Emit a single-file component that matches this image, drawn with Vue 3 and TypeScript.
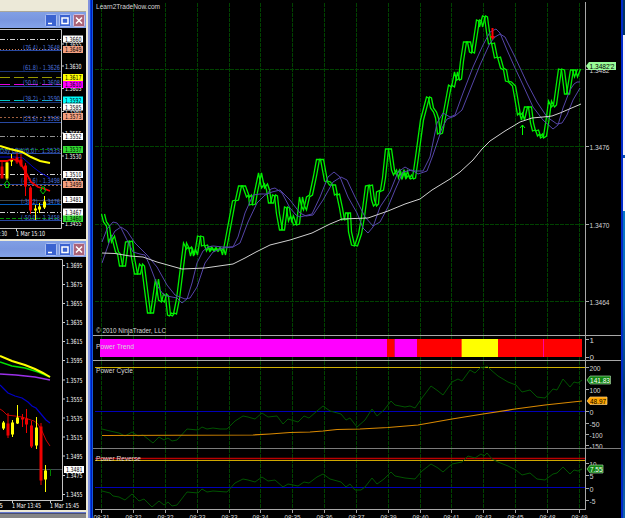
<style scoped>
.workspace {
    display: flex;
    width: 625px;
    height: 518px;
    overflow: hidden;
    background: #000;
    font-family: "Liberation Sans", Arial, sans-serif;
}

svg {
    display: block;
    flex: none;
}

.terminals {
    width: 86px;
    flex: none;
    display: flex;
    flex-direction: column;
    background: #858585;
}

.toolbar {
    height: 11px;
    background: #ece9d8;
    border-bottom: 1px solid #aaa79c;
}

.titlebar {
    height: 16px;
    box-sizing: border-box;
    display: flex;
    justify-content: flex-end;
    align-items: center;
    gap: 2px;
    padding-right: 1px;
    background: linear-gradient(#819fe5, #7996df 50%, #84a3e9);
}

.titlebar.second {
    height: 18px;
    border-top: 2px solid #ece9d8;
}

.bottom-edge {
    height: 1px;
    border-top: 2px solid #ece9d8;
    border-bottom: 1px solid #4a4f70;
    background: #6378cf;
}

.frame {
    width: 7px;
    flex: none;
    background: linear-gradient(90deg, #ece9d8 0 2px, #8192de 2px 4px, #0046e0 4px 5px, #0019bc 5px 6px, #155ad8 6px);
}

.platform {
    width: 528px;
    flex: none;
    display: flex;
    flex-direction: column;
}

.platform svg {
    overflow: visible;
}

.edge {
    width: 2px;
    flex: none;
    background: #0029c9;
}

.desktop {
    width: 2px;
    flex: none;
    display: flex;
    flex-direction: column;
    background: #064c98;
}

.desktop .sky {
    height: 35px;
    background: #03345f;
}

.desktop .page {
    height: 176px;
    background: linear-gradient(#f4f4fa 0 120px, #0a50b0 120px 123px, #f4f4fa 123px);
}

.desktop .hill {
    flex: 1;
    background: linear-gradient(#0878c4, #0768b8 30%, #03366d 60%, #1266b0);
}

text {
    fill: #d6d6d6;
    font-size: 8px;
}

.mt text {
    fill: #fff;
    font-family: "DejaVu Sans", "Liberation Sans", sans-serif;
    font-size: 7px;
}

.mt text.fib {
    fill: #4a70dc;
}

.mt text.dark,
text.dark {
    fill: #000;
}

text.light {
    fill: #fff;
}

polyline,
.line {
    fill: none;
}

.grid {
    stroke: #004300;
    stroke-dasharray: 4 1;
}

.axis {
    stroke: #a8a8a8;
}

.price {
    stroke: #00f000;
    stroke-width: 1.3;
}

.average {
    stroke: #5545a8;
}

.slow {
    stroke: #d0d0d0;
}

.osc {
    stroke: #005400;
}
</style>

<template>
    <div class="workspace">
        <aside class="terminals">
            <div class="toolbar"></div>
            <div class="titlebar">
                <svg v-for="b in buttons" :key="b.name" width="12" height="13" viewBox="0 0 12 13">
                    <rect x=".5" y=".5" width="11" height="12" rx="1" :fill="b.fill" :stroke="b.border" />
                    <path :d="b.path" fill="none" stroke="#fff" stroke-width="1.5" />
                </svg>
            </div>
            <svg class="mt" width="86" height="211" viewBox="0 28 86 211">
                <rect y="28" width="86" height="211" />
                <path d="M0 29.500H61.500V228.500H0" class="line" stroke="#c4c4c4" />
                <line v-for="(l, i) in levels" :key="i" x1="0" x2="61" :y1="l.y" :y2="l.y" :stroke="l.color" :stroke-dasharray="l.dash" />
                <text v-for="f in fibs" :key="f.y" class="fib" :x="f.x" :y="f.y" :textLength="60 - f.x" lengthAdjust="spacingAndGlyphs">{{ f.text }}</text>
                <polyline points="0,157 15,157 23,158 33,167 41,173 50,178" stroke="#0000c8" />
                <g v-for="c in topCandles" :key="c.x" :fill="c.color" :stroke="c.color">
                    <line :x1="c.x" :x2="c.x" :y1="c.high" :y2="c.low" />
                    <rect :x="c.x - 1" :y="c.top" width="2" :height="c.bottom - c.top" />
                </g>
                <polyline points="0,161 7,161 12,159 19,161 24,169 31,182 38,187 45,189 50,191" stroke="#f00000" stroke-width="1.8" />
                <polyline points="0,146 10,149 22,152 31,157 40,161 50,163" stroke="#ffff00" stroke-width="2" />
                <path d="M7 180.500l-3 4h1.500v3h3v-3h1.500z" stroke="#00c000" class="line" />
                <path d="M43 194l-3-4h1.500v-3h3v3h1.500z" stroke="#00c000" class="line" />
                <g v-for="p in topPrices" :key="p.y">
                    <rect v-if="p.color" x="63" :y="p.y - 3.500" width="20" height="7" :fill="p.color" />
                    <line v-else x1="62" x2="64" :y1="p.y" :y2="p.y" stroke="#ccc" />
                    <text :class="{ dark: p.color }" x="65" :y="p.y + 2.500" textLength="16.500" lengthAdjust="spacingAndGlyphs">{{ p.text }}</text>
                </g>
                <path d="M16.500 228v3" stroke="#ccc" />
                <text x="0" y="236" textLength="7" lengthAdjust="spacingAndGlyphs">:30</text>
                <text x="16" y="236" textLength="29" lengthAdjust="spacingAndGlyphs">1 Mar 15:10</text>
            </svg>
            <div class="titlebar second">
                <svg v-for="b in buttons" :key="b.name" width="12" height="13" viewBox="0 0 12 13">
                    <rect x=".5" y=".5" width="11" height="12" rx="1" :fill="b.fill" :stroke="b.border" />
                    <path :d="b.path" fill="none" stroke="#fff" stroke-width="1.5" />
                </svg>
            </div>
            <svg class="mt" width="86" height="253" viewBox="0 257 86 253">
                <rect y="257" width="86" height="253" />
                <path d="M0 259.500H62.500V500.500H0" class="line" stroke="#c4c4c4" />
                <polyline points="0,374 16,375 35,377 50,380" stroke="#9b30e8" stroke-width="1.3" />
                <polyline points="0,362 12,366 25,368 38,372 50,377" stroke="#00e000" stroke-width="1.5" />
                <polyline points="0,356 12,361 25,365 35,369 43,373 50,377" stroke="#ffff00" stroke-width="2" />
                <polyline points="0,385 4,389 8,393 15,396 22,398 28,402 32,406 36,408 41,414 46,420 50,423" stroke="#0000c8" stroke-width="1.2" />
                <polyline points="0,409 3,411 7,415 15,416 22,417 28,419 34,421 38,424 42,431 46,440 50,446" stroke="#c80000" />
                <path d="M0 469.500H62" stroke="#414b50" />
                <g v-for="c in bottomCandles" :key="c.x" :fill="c.color" :stroke="c.color">
                    <line :x1="c.x" :x2="c.x" :y1="c.high" :y2="c.low" />
                    <rect :x="c.x - 1" :y="c.top" width="2" :height="c.bottom - c.top" />
                </g>
                <path d="M50.500 469v7" stroke="#008000" />
                <g v-for="p in bottomPrices" :key="p.y">
                    <rect v-if="p.color" x="64" :y="p.y - 3.500" width="20" height="7" :fill="p.color" />
                    <line v-else x1="63" x2="65" :y1="p.y" :y2="p.y" stroke="#ccc" />
                    <text :class="{ dark: p.color }" x="66" :y="p.y + 2.500" textLength="16.500" lengthAdjust="spacingAndGlyphs">{{ p.text }}</text>
                </g>
                <path d="M12.500 500v3M50.500 500v3" stroke="#ccc" />
                <text x="-1" y="508" textLength="4" lengthAdjust="spacingAndGlyphs">5</text>
                <text x="12" y="508" textLength="29" lengthAdjust="spacingAndGlyphs">1 Mar 13:45</text>
                <text x="50" y="508" textLength="29" lengthAdjust="spacingAndGlyphs">1 Mar 15:45</text>
            </svg>
            <div class="bottom-edge"></div>
        </aside>
        <div class="frame"></div>

        <main class="platform">
            <svg width="528" height="335" viewBox="93 0 528 335">
                <line v-for="x in columns" :key="x" class="grid" :x1="x" :x2="x" y1="3" y2="335" />
                <line v-for="p in prices" :key="p.y" class="grid" x1="95" x2="585" :y1="p.y" :y2="p.y" />
                <path class="axis" d="M585.500 2V335" />
                <polyline class="price" :points="price" transform="translate(-1.500 0)" />
                <polyline class="price" :points="price" transform="translate(1.500 0)" />
                <polyline class="average" :points="fastAverage" />
                <polyline class="average" :points="slowAverage" />
                <polyline class="slow" :points="trendAverage" />
                <path d="M492.500 28v9" stroke="#f00" stroke-width="2" />
                <path d="M490 36h5l-2.500 4z" fill="#f00" />
                <path d="M522.500 135v-10M520 128l2.500-3 2.500 3" class="line" stroke="#00ff00" />
                <g v-for="p in prices" :key="p.text">
                    <path class="axis" :d="`M585 ${p.y}h4`" />
                    <text x="589.500" :y="p.y + 3" textLength="20" lengthAdjust="spacingAndGlyphs">{{ p.text }}</text>
                </g>
                <path d="M586 66l3-4h27v8h-27z" fill="#98fb98" />
                <text class="dark" x="589.500" y="69" textLength="25" lengthAdjust="spacingAndGlyphs">1.3482'2</text>
                <text x="96" y="9" textLength="64" lengthAdjust="spacingAndGlyphs">Learn2TradeNow.com</text>
                <text x="96" y="333" textLength="70" lengthAdjust="spacingAndGlyphs">© 2010 NinjaTrader, LLC</text>
            </svg>

            <svg width="528" height="25" viewBox="93 335 528 25">
                <path class="axis" d="M93 335.500H621M585.500 335V360M585 339.500h4M585 357.500h4" />
                <line v-for="x in columns" :key="x" class="grid" :x1="x" :x2="x" y1="336" y2="360" />
                <rect v-for="t in trend" :key="t.x" :x="t.x" y="339" :width="t.end - t.x" height="18" :fill="t.color" />
                <text x="96" y="348.500" textLength="38" lengthAdjust="spacingAndGlyphs">Power Trend</text>
                <text x="589.500" y="343" textLength="3.500">1</text>
                <text x="589.500" y="360" textLength="3.500">0</text>
            </svg>

            <svg width="528" height="88" viewBox="93 360 528 88">
                <path class="axis" d="M93 360.500H621M585.500 360V448" />
                <line v-for="x in columns" :key="x" class="grid" :x1="x" :x2="x" y1="361" y2="448" />
                <path d="M95 367.500H585" stroke="#d0b000" />
                <path d="M95 411.500H585" stroke="#0000b8" />
                <polyline class="osc" :points="cycle" />
                <polyline points="102,435.500 253,435 270,434 290,432.500 310,432 323,431 337,429.500 360,429 388,427.500 418,425 452,419 483,414 515,409 545,405 582,401" stroke="#d88800" stroke-width="1.2" />
                <text x="96" y="373" textLength="37" lengthAdjust="spacingAndGlyphs">Power Cycle</text>
                <g v-for="t in cycleTicks" :key="t.y">
                    <path class="axis" :d="`M585 ${t.y}h4`" />
                    <text :x="589.500" :y="t.y + 3" :textLength="t.width" lengthAdjust="spacingAndGlyphs">{{ t.text }}</text>
                </g>
                <path d="M587 380l3-4h20.500v8h-20.500z" fill="#118411" stroke="#9fcf9f" stroke-width=".7" />
                <text class="light" x="590" y="383" textLength="20" lengthAdjust="spacingAndGlyphs">141.83</text>
                <path d="M587 401l3-4h17v7.500h-17z" fill="#ffa500" stroke="#ffd080" stroke-width=".7" />
                <text class="dark" x="590" y="403.500" textLength="16" lengthAdjust="spacingAndGlyphs">48.97</text>
            </svg>

            <svg width="528" height="70" viewBox="93 448 528 70">
                <path stroke="#7c7c7c" d="M93 448.500H621" />
                <path class="axis" d="M585.500 448V510" />
                <line v-for="x in columns" :key="x" class="grid" :x1="x" :x2="x" y1="449" y2="509" />
                <path d="M95 458.500H585" stroke="#b80000" stroke-width="1.400" />
                <path d="M95 460.500H585" stroke="#d0a800" />
                <path d="M95 487.500H585" stroke="#0000b8" />
                <polyline class="osc" :points="reverse" />
                <path class="axis" d="M95 509.500H586" />
                <text x="96" y="461" textLength="45" lengthAdjust="spacingAndGlyphs">Power Reverse</text>
                <g v-for="t in reverseTicks" :key="t.y">
                    <path class="axis" :d="`M585 ${t.y}h4`" />
                    <text :x="589.500" :y="t.y + 3" :textLength="t.width" lengthAdjust="spacingAndGlyphs">{{ t.text }}</text>
                </g>
                <path d="M587 469l3-4h13v8h-13z" fill="#118411" stroke="#9fcf9f" stroke-width=".7" />
                <text class="light" x="590" y="472" textLength="12.500" lengthAdjust="spacingAndGlyphs">7.55</text>
                <g v-for="(x, i) in columns" :key="x">
                    <path class="axis" :d="`M${x} 509v4`" />
                    <text :x="x - 8" y="520" textLength="16" lengthAdjust="spacingAndGlyphs">{{ times[i] }}</text>
                </g>
            </svg>
        </main>

        <div class="edge"></div>
        <div class="desktop">
            <div class="sky"></div>
            <div class="page"></div>
            <div class="hill"></div>
        </div>
    </div>
</template>

<script setup lang="ts">
interface Candle {
    x: number;
    high: number;
    top: number;
    bottom: number;
    low: number;
    color: string;
}

interface PriceLabel {
    y: number;
    text: string;
    color?: string;
}

const buttons = [
    { name: "minimize", fill: "#3a62d0", border: "#a9bdf2", path: "M3 9.5h4" },
    { name: "maximize", fill: "#3a62d0", border: "#a9bdf2", path: "M3 4h6v5.500h-6z" },
    { name: "close", fill: "#ac6478", border: "#d0bfe0", path: "M3 3.500l6 6M9 3.500l-6 6" }
];

const levels = [
    { y: 39.5, color: "#d0d0d0", dash: "5 2 1 2" },
    { y: 49.5, color: "#c87850", dash: "1 2" },
    { y: 50.5, color: "#2848a0", dash: "" },
    { y: 71.5, color: "#1c3478", dash: "" },
    { y: 77.5, color: "#989800", dash: "10 4" },
    { y: 84.5, color: "#e000e0", dash: "10 4" },
    { y: 86.5, color: "#2848a0", dash: "" },
    { y: 100.5, color: "#00c8c8", dash: "10 4" },
    { y: 102.5, color: "#1c3478", dash: "" },
    { y: 107.5, color: "#d0d0d0", dash: "5 2 1 2" },
    { y: 117.5, color: "#a06040", dash: "2 2" },
    { y: 122.5, color: "#2848a0", dash: "" },
    { y: 136.5, color: "#909090", dash: "5 2 1 2" },
    { y: 149.5, color: "#008000", dash: "3 2" },
    { y: 153.5, color: "#2848a0", dash: "" },
    { y: 174.5, color: "#d0d0d0", dash: "5 2 1 2" },
    { y: 184.5, color: "#2848a0", dash: "" },
    { y: 185.5, color: "#a06040", dash: "2 2" },
    { y: 200.5, color: "#40484c", dash: "" },
    { y: 204.5, color: "#0058b8", dash: "" },
    { y: 212.5, color: "#d0d0d0", dash: "5 2 1 2" },
    { y: 218.5, color: "#009000", dash: "4 2" },
    { y: 220.5, color: "#2848a0", dash: "" }
];

const fibs = [
    { x: 23, y: 49.5, text: "(76.4) -  1.3648" },
    { x: 23, y: 70, text: "(61.8) -  1.3626" },
    { x: 23, y: 85, text: "(50.0) -  1.3608" },
    { x: 23, y: 101, text: "(38.2) -  1.3590" },
    { x: 23, y: 121, text: "(23.6) -  1.3568" },
    { x: 0, y: 152.5, text: "Day  LOW(0.0) -  1.3533" },
    { x: 21, y: 183, text: "(-23.6) -  1.3498" },
    { x: 21, y: 204, text: "(-38.2) -  1.3476" },
    { x: 21, y: 219.5, text: "(-50.0) -  1.3458" }
];

const red = "#f00000";
const yellow = "#ffff00";
const salmon = "#f4a080";

const topCandles: Candle[] = [
    { x: 2, high: 160, top: 167, bottom: 178, low: 178, color: red },
    { x: 7, high: 160, top: 163, bottom: 178, low: 180, color: yellow },
    { x: 11.5, high: 154, top: 160, bottom: 161, low: 166, color: yellow },
    { x: 17, high: 153, top: 158, bottom: 162, low: 164, color: red },
    { x: 21, high: 154, top: 160, bottom: 165, low: 167, color: red },
    { x: 25.5, high: 163, top: 166, bottom: 186, low: 196, color: red },
    { x: 30.5, high: 186, top: 188, bottom: 210, low: 214, color: red },
    { x: 35.5, high: 205, top: 209, bottom: 210, low: 220, color: yellow },
    { x: 39.5, high: 203, top: 207, bottom: 209, low: 213, color: yellow },
    { x: 44.5, high: 196, top: 202, bottom: 207, low: 209, color: yellow }
];

const bottomCandles: Candle[] = [
    { x: 3.5, high: 421, top: 423, bottom: 428, low: 430, color: yellow },
    { x: 8, high: 413, top: 424, bottom: 435, low: 438, color: red },
    { x: 12.5, high: 420, top: 423, bottom: 434, low: 437, color: yellow },
    { x: 17.5, high: 405, top: 418, bottom: 423, low: 424, color: yellow },
    { x: 22.5, high: 414, top: 418, bottom: 419, low: 427, color: red },
    { x: 26.5, high: 409, top: 419, bottom: 424, low: 433, color: red },
    { x: 31.5, high: 421, top: 426, bottom: 446, low: 448, color: red },
    { x: 36.5, high: 417, top: 428, bottom: 445, low: 449, color: yellow },
    { x: 41, high: 423, top: 427, bottom: 480, low: 485, color: red },
    { x: 45.5, high: 465, top: 471, bottom: 479, low: 492, color: yellow }
];

// plain axis prices first, the coloured tags are drawn over them
const topPrices: PriceLabel[] = [
    { y: 44, text: "1.3655" },
    { y: 66, text: "1.3630" },
    { y: 88.5, text: "1.3605" },
    { y: 111.5, text: "1.3580" },
    { y: 133, text: "1.3555" },
    { y: 156, text: "1.3530" },
    { y: 179, text: "1.3505" },
    { y: 223.5, text: "1.3455" },
    { y: 39, text: "1.3660", color: "#ffffff" },
    { y: 49.5, text: "1.3649", color: salmon },
    { y: 77.5, text: "1.3617", color: "#ffff00" },
    { y: 84.5, text: "1.3610", color: "#ff00ff" },
    { y: 100, text: "1.3592", color: "#00ffff" },
    { y: 107, text: "1.3585", color: "#ffffff" },
    { y: 116.5, text: "1.3573", color: salmon },
    { y: 136.5, text: "1.3552", color: "#ffffff" },
    { y: 149.5, text: "1.3537", color: "#30d830" },
    { y: 174.5, text: "1.3510", color: "#ffffff" },
    { y: 184.5, text: "1.3499", color: salmon },
    { y: 199.5, text: "1.3481", color: "#ffffff" },
    { y: 218.5, text: "1.3460", color: "#30d830" },
    { y: 212, text: "1.3467", color: "#ffffff" }
];

const bottomPrices: PriceLabel[] = [
    { y: 265.5, text: "1.3695" },
    { y: 284.5, text: "1.3675" },
    { y: 303.5, text: "1.3655" },
    { y: 322.5, text: "1.3635" },
    { y: 341.5, text: "1.3615" },
    { y: 360.5, text: "1.3595" },
    { y: 380, text: "1.3575" },
    { y: 399, text: "1.3555" },
    { y: 418, text: "1.3535" },
    { y: 437, text: "1.3515" },
    { y: 456, text: "1.3495" },
    { y: 475.5, text: "1.3475" },
    { y: 494.5, text: "1.3455" },
    { y: 469.5, text: "1.3481", color: "#ffffff" }
];

const columns = [101.5, 133.5, 165.5, 197.5, 229.5, 260.5, 292.5, 324.5, 356.5, 388.5, 420.5, 451.5, 483.5, 515.5, 547.5, 579.5];
const times = ["08:31", "08:32", "08:32", "08:33", "08:33", "08:34", "08:35", "08:36", "08:37", "08:39", "08:40", "08:41", "08:43", "08:45", "08:48", "08:49"];

const prices = [
    { y: 69.5, text: "1.3482" },
    { y: 146.5, text: "1.3476" },
    { y: 224.5, text: "1.3470" },
    { y: 301.5, text: "1.3464" }
];

const trend = [
    { x: 100, end: 387, color: "#ff00ff" },
    { x: 387, end: 394, color: "#ff0000" },
    { x: 394, end: 395, color: "#d01060" },
    { x: 395, end: 417, color: "#ff00ff" },
    { x: 417, end: 461, color: "#ff0000" },
    { x: 461, end: 462, color: "#ff6000" },
    { x: 462, end: 498, color: "#ffff00" },
    { x: 498, end: 543, color: "#ff0000" },
    { x: 543, end: 544, color: "#ff00a0" },
    { x: 544, end: 582, color: "#ff0000" }
];

const cycleTicks = [
    { y: 367.5, text: "200", width: 11 },
    { y: 389.5, text: "100", width: 11 },
    { y: 411.5, text: "0", width: 4 },
    { y: 423.5, text: "-50", width: 10 },
    { y: 434.5, text: "-100", width: 13 },
    { y: 445.5, text: "-150", width: 13 }
];

const reverseTicks = [
    { y: 463.5, text: "10", width: 7 },
    { y: 475.5, text: "5", width: 4 },
    { y: 488.5, text: "0", width: 4 },
    { y: 500.5, text: "-5", width: 6 }
];

const price = "103,214 105,222 108,226 110,242 113,236 117,252 119,254 121,266 124,266 127,242 131,241 133,258 136,274 139,274 141,264 143,266 149,313 152,313 157,279 160,300 163,302 165,294 167,296 169,315 171,316 173,313 175,314 178,299 185,243 188,249 190,247 192,256 194,249 196,255 199,236 202,237 203,246 206,245 208,251 210,247 212,251 214,248 216,251 218,248 220,251 222,248 224,255 229,228 234,201 237,200 240,186 244,186 248,197 250,195 251,205 254,204 256,192 260,173 263,188 266,184 268,190 270,203 272,203 274,195 276,196 278,214 281,230 283,230 286,207 288,208 290,221 292,216 295,225 298,224 301,197 303,206 305,210 308,197 311,195 315,176 318,159.5 322,159.5 326,181 329,182 331,185 334,185 336,195 338,194 341,208 343,220 346,219 347,213 349,213 350,232 353,245 356,246 358,240 360,234 363,217 367,186 371,185 373,200 375,206 377,204 378,192 382,190 384,178 387,149 390,149 393,170 395,175 398,170 400,178 402,171 404,178 406,171 408,178 410,175 412,179 414,178 417,157 422,120 428,97 430,98 432,108 435,112 437,118 439,134 441,133 445,112 450,85 453,87 456,72 458,80 460,79 462,61 465,42 469,42 471,52 473,53 478,20 480,21 481,27 484,16 486,17 488,32 490,44 493,43 496,58 499,57 502,68 505,70 507,81 510,82 514,86 516,97 519,115 521,113 523,120 526,107 530,107 532,123 534,131 537,130 539,136 541,134 542,138 545,136 548,117 550,101 553,107 555,105 560,69 563,70 566,94 568,94 572,70 574,70 576,77 579,69";

const fastAverage = "102,242 107,229 113,222 117,223 121,228 127,240 133,252 140,254 145,255 150,266 158,287 163,294 167,296 177,298 182,303 187,299 192,283 197,263 203,251 208,247 213,246 223,247 233,247 238,237 245,213 253,195 260,194 267,194 271,189 275,188 282,193 290,208 296,215 300,217 312,214 320,197 328,177 334,172 340,177 348,197 357,213 363,228 368,233 373,227 380,207 390,192 398,172 405,167 412,171 423,171 430,157 437,123 443,113 450,117 455,115 463,93 473,67 483,45 490,32 496,29 500,33 507,50 515,68 523,85 533,107 543,120 553,129 558,125 563,108 570,90 574,84 577,82 580,82";

const slowAverage = "102,263 110,240 115,231 121,227 127,231 135,243 147,255 157,267 167,285 175,295 185,299 190,298 197,287 205,263 213,252 223,248 233,247 240,243 248,222 257,203 265,195 272,192 280,190 290,200 300,213 306,216 313,215 323,200 333,182 341,177 347,180 355,197 365,217 373,226 380,222 388,207 395,190 403,172 412,170 418,174 427,171 433,155 442,128 447,119 455,116 462,110 470,90 480,65 490,43 495,37 500,34 505,37 515,57 527,83 537,102 547,117 557,124 562,123 567,115 573,100 580,88";

const trendAverage = "102,253 115,253.5 130,256 143,257 157,262 182,269 205,268 233,264 245,258 256,252 270,245 290,240 312,233 330,224 342,219 368,218 388,211 405,204 420,199 432,190 450,179 460,172 473,160 482,149 490,141 505,131 520,122 532,118 543,117 552,116 560,113 581,104";

const cycle = "102,429 110,431 119,433 125,436 132,432 138,436 143,435 153,443 159,437 164,440 168,438 172,441 177,440 187,429 198,430 202,427 207,429 213,428 220,429 227,429 235,421 243,416 248,417 255,419 262,413 268,417 277,416 283,424 288,419 298,422 304,416 309,418 317,411 323,406 330,411 341,414 346,420 350,418 357,427 365,420 372,409 377,416 384,410 391,401 395,405 405,407 410,406 415,408 422,398 431,386 438,391 443,395 452,382 458,379 462,381 470,370 475,373 481,367 483,368 487,366 491,370 498,376 508,382 516,385 522,392 530,390 537,397 545,398 553,389 557,390 563,379 570,387 574,382 578,383 582,380";

const reverse = "102,491 110,493 113,496 119,497 125,500 132,494 139,501 144,499 152,507 159,501 164,505 168,502 172,506 177,505 187,492 198,493 202,489 207,492 213,491 227,492 235,483 243,479 248,480 255,482 262,477 268,481 275,480 283,487 288,484 298,486 304,482 309,483 317,477 323,474 330,479 341,482 346,487 350,484 355,490 361,490 365,487 372,478 377,484 384,479 391,472 395,476 405,478 415,479 422,471 431,464 438,468 443,472 452,464 462,462 468,456 475,458 481,454 484,456 487,453 492,459 498,462 508,466 516,470 522,475 530,473 537,479 545,480 553,474 557,473 563,467 570,474 574,470 578,471 582,469";
</script>

<style>
body {
    background: #000;
    overflow: hidden;
}
</style>
